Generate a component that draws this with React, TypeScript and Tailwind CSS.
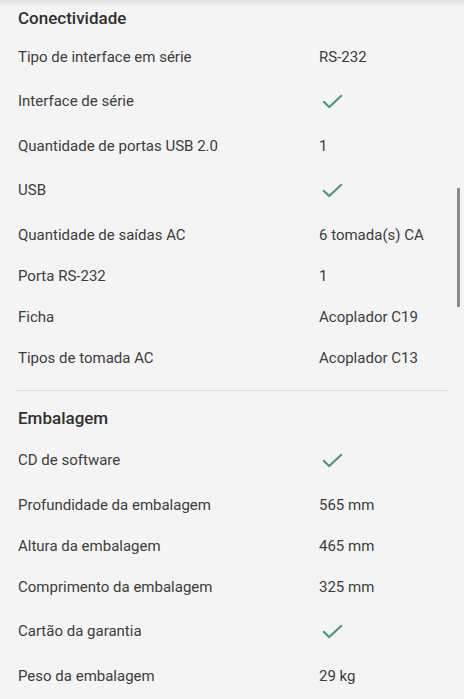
import React from "react";

type Row = { label: string; value?: string; check?: boolean };

const conectividade: Row[] = [
  { label: "Tipo de interface em série", value: "RS-232" },
  { label: "Interface de série", check: true },
  { label: "Quantidade de portas USB 2.0", value: "1" },
  { label: "USB", check: true },
  { label: "Quantidade de saídas AC", value: "6 tomada(s) CA" },
  { label: "Porta RS-232", value: "1" },
  { label: "Ficha", value: "Acoplador C19" },
  { label: "Tipos de tomada AC", value: "Acoplador C13" },
];

const embalagem: Row[] = [
  { label: "CD de software", check: true },
  { label: "Profundidade da embalagem", value: "565 mm" },
  { label: "Altura da embalagem", value: "465 mm" },
  { label: "Comprimento da embalagem", value: "325 mm" },
  { label: "Cartão da garantia", check: true },
  { label: "Peso da embalagem", value: "29 kg" },
];

function Check() {
  return (
    <svg width="21" height="15" viewBox="0 0 21 15" className="ml-[3px]">
      <polyline
        points="1.2,7.2 7.2,13 19.8,1.2"
        fill="none"
        stroke="#3f9a76"
        strokeWidth="2"
        strokeLinecap="butt"
        strokeLinejoin="miter"
      />
    </svg>
  );
}

function Rows({ rows }: { rows: Row[] }) {
  return (
    <div className="flex flex-col">
      {rows.map((r) => (
        <div
          key={r.label}
          className={`grid grid-cols-[301px_1fr] items-center ${r.check ? "h-[48px]" : "h-[41px]"}`}
        >
          <div className="text-[15px] leading-5 text-[#3c3c3c]">{r.label}</div>
          <div className="text-[15px] leading-5 text-[#3c3c3c] flex items-center">
            {r.check ? <Check /> : r.value}
          </div>
        </div>
      ))}
    </div>
  );
}

export default function App() {
  return (
    <div
      className="relative w-[464px] h-[699px] overflow-hidden bg-[#f4f4f4]"
      style={{ fontFamily: "Roboto, 'Noto Sans', sans-serif" }}
    >
      <div className="absolute top-0 left-0 right-0 h-[7px] bg-gradient-to-b from-[rgba(0,0,0,0.07)] to-transparent" />
      <div className="absolute left-[457px] top-[188px] w-[3px] h-[119px] bg-[#8a8a8a]" />
      <div className="pt-[6px] pl-[18px] pr-[17px]">
        <h2 className="h-6 leading-6 text-[17px] font-medium text-[#303030] mb-[6px]">
          Conectividade
        </h2>
        <Rows rows={conectividade} />
        <div className="mt-[12px] h-px bg-[#dcdcdc] -ml-px" />
        <h2 className="mt-[15px] h-6 leading-6 text-[17px] font-medium text-[#303030] mb-[6px]">
          Embalagem
        </h2>
        <Rows rows={embalagem} />
      </div>
    </div>
  );
}
